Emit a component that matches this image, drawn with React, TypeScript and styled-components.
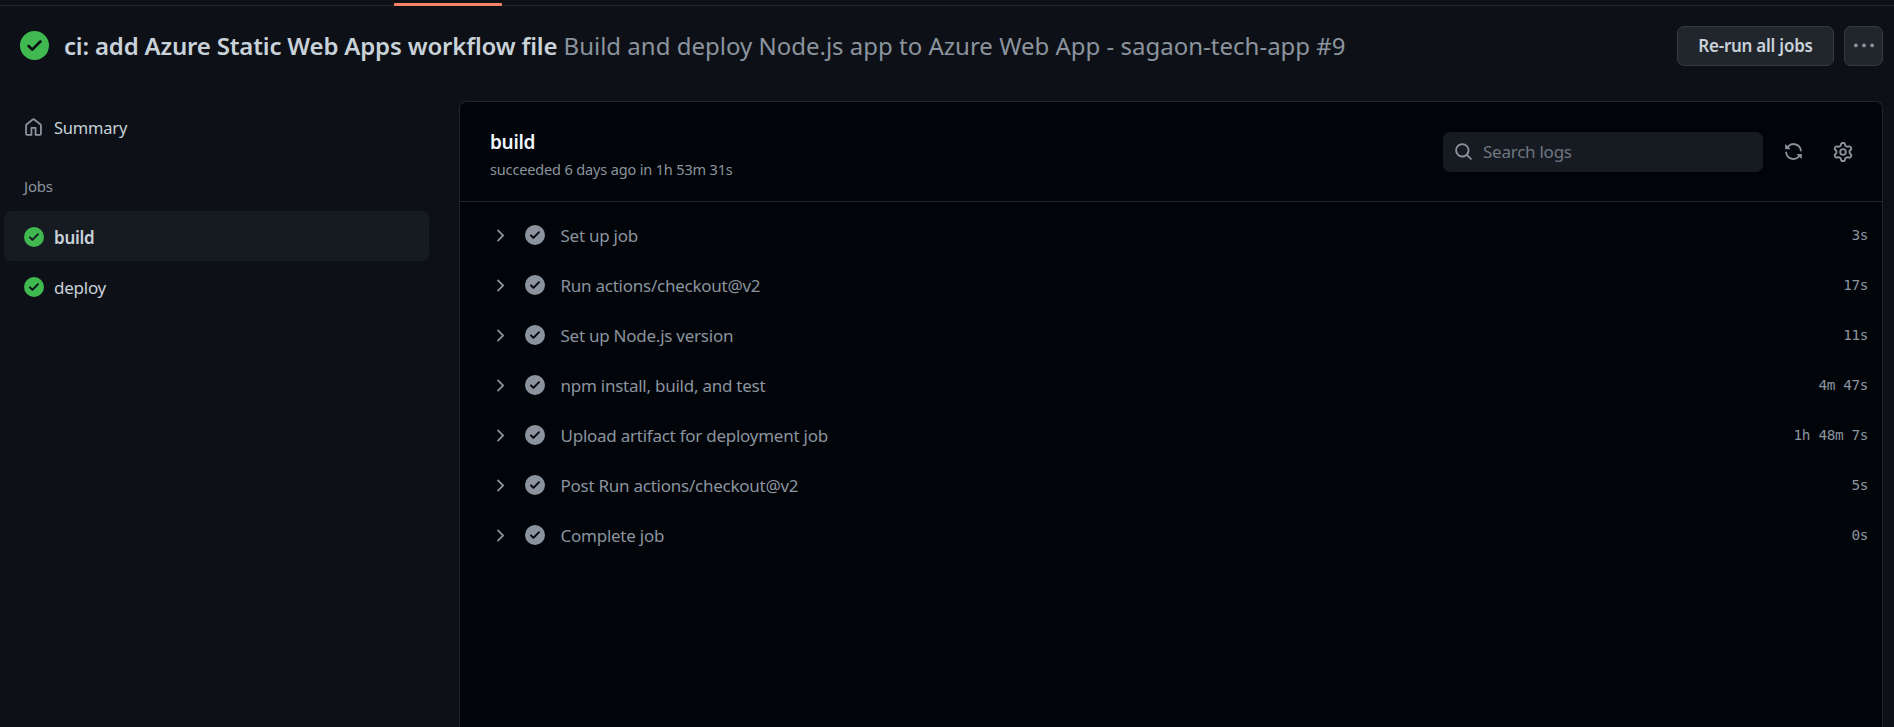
import { createGlobalStyle } from "styled-components";
import styled from "styled-components";

const CHECK_FILL =
  "M8 16A8 8 0 1 1 8 0a8 8 0 0 1 0 16Zm3.78-9.72a.751.751 0 0 0-.018-1.042.751.751 0 0 0-1.042-.018L6.75 9.19 5.28 7.72a.751.751 0 0 0-1.042.018.751.751 0 0 0-.018 1.042l2 2a.75.75 0 0 0 1.06 0Z";
const HOME =
  "M6.906.664a1.749 1.749 0 0 1 2.187 0l5.25 4.2c.415.332.657.835.657 1.367v7.019A1.75 1.75 0 0 1 13.25 15h-3.5a.75.75 0 0 1-.75-.75V9H7v5.25a.75.75 0 0 1-.75.75h-3.5A1.75 1.75 0 0 1 1 13.25V6.23c0-.531.242-1.034.657-1.366l5.25-4.2Zm1.25 1.171a.25.25 0 0 0-.312 0l-5.25 4.2a.25.25 0 0 0-.094.196v7.019c0 .138.112.25.25.25H5.5V8.25a.75.75 0 0 1 .75-.75h3.5a.75.75 0 0 1 .75.75v5.25h2.75a.25.25 0 0 0 .25-.25V6.23a.25.25 0 0 0-.094-.195Z";
const CHEVRON =
  "M6.22 3.22a.75.75 0 0 1 1.06 0l4.25 4.25a.75.75 0 0 1 0 1.06l-4.25 4.25a.751.751 0 0 1-1.042-.018.751.751 0 0 1-.018-1.042L9.94 8 6.22 4.28a.75.75 0 0 1 0-1.06Z";
const SEARCH =
  "M10.68 11.74a6 6 0 0 1-7.922-8.982 6 6 0 0 1 8.982 7.922l3.04 3.04a.749.749 0 0 1-.326 1.275.749.749 0 0 1-.734-.215ZM11.5 7a4.499 4.499 0 1 0-8.997 0A4.499 4.499 0 0 0 11.5 7Z";
const SYNC =
  "M1.705 8.005a.75.75 0 0 1 .834.656 5.5 5.5 0 0 0 9.592 2.97l-1.204-1.204a.25.25 0 0 1 .177-.427h3.646a.25.25 0 0 1 .25.25v3.646a.25.25 0 0 1-.427.177l-1.38-1.38A7.002 7.002 0 0 1 1.05 8.84a.75.75 0 0 1 .656-.834ZM8 2.5a5.487 5.487 0 0 0-4.131 1.869l1.204 1.204A.25.25 0 0 1 4.896 6H1.25A.25.25 0 0 1 1 5.75V2.104a.25.25 0 0 1 .427-.177l1.38 1.38A7.002 7.002 0 0 1 14.95 7.16a.75.75 0 0 1-1.49.178A5.5 5.5 0 0 0 8 2.5Z";
const GEAR =
  "M8 0a8.2 8.2 0 0 1 .701.031C9.444.095 9.99.645 10.16 1.29l.288 1.107c.018.066.079.158.212.224.231.114.454.243.668.386.123.082.233.09.299.071l1.103-.303c.644-.176 1.392.021 1.82.63.27.385.506.792.704 1.218.315.675.111 1.422-.364 1.891l-.814.806c-.049.048-.098.147-.088.294.016.257.016.515 0 .772-.01.147.038.246.088.294l.814.806c.475.469.679 1.216.364 1.891a7.977 7.977 0 0 1-.704 1.217c-.428.61-1.176.807-1.82.63l-1.102-.302c-.067-.019-.177-.011-.3.071a5.909 5.909 0 0 1-.668.386c-.133.066-.194.158-.211.224l-.29 1.106c-.168.646-.715 1.196-1.458 1.26a8.006 8.006 0 0 1-1.402 0c-.743-.064-1.289-.614-1.458-1.26l-.289-1.106c-.018-.066-.079-.158-.212-.224a5.738 5.738 0 0 1-.668-.386c-.123-.082-.233-.09-.299-.071l-1.103.303c-.644.176-1.392-.021-1.82-.63a8.12 8.12 0 0 1-.704-1.218c-.315-.675-.111-1.422.363-1.891l.815-.806c.05-.048.098-.147.088-.294a6.214 6.214 0 0 1 0-.772c.01-.147-.038-.246-.088-.294l-.815-.806C.635 6.045.431 5.298.746 4.623a7.92 7.92 0 0 1 .704-1.217c.428-.61 1.176-.807 1.82-.63l1.102.302c.067.019.177.011.3-.071.214-.143.437-.272.668-.386.133-.066.194-.158.211-.224l.29-1.106C6.009.645 6.556.095 7.299.03 7.53.01 7.764 0 8 0Zm-.571 1.525c-.036.003-.108.036-.137.146l-.289 1.105c-.147.561-.549.967-.998 1.189-.173.086-.34.183-.5.29-.417.278-.97.423-1.529.27l-1.103-.303c-.109-.03-.175.016-.195.045-.22.312-.412.644-.573.99-.014.031-.021.11.059.19l.815.806c.411.406.562.957.53 1.456a4.709 4.709 0 0 0 0 .582c.032.499-.119 1.05-.53 1.456l-.815.806c-.081.08-.073.159-.059.19.162.346.353.677.573.989.02.03.085.076.195.046l1.102-.303c.56-.153 1.113-.008 1.53.27.161.107.328.204.501.29.447.222.85.629.997 1.189l.289 1.105c.029.109.101.143.137.146a6.6 6.6 0 0 0 1.142 0c.036-.003.108-.036.137-.146l.289-1.105c.147-.561.549-.967.998-1.189.173-.086.34-.183.5-.29.417-.278.97-.423 1.529-.27l1.103.303c.109.029.175-.016.195-.045.22-.313.411-.644.573-.99.014-.031.021-.11-.059-.19l-.815-.806c-.411-.406-.562-.957-.53-1.456a4.709 4.709 0 0 0 0-.582c-.032-.499.119-1.05.53-1.456l.815-.806c.081-.08.073-.159.059-.19a6.464 6.464 0 0 0-.573-.989c-.02-.03-.085-.076-.195-.046l-1.102.303c-.56.153-1.113.008-1.53-.27a4.44 4.44 0 0 0-.501-.29c-.447-.222-.85-.629-.997-1.189l-.289-1.105c-.029-.11-.101-.143-.137-.146a6.6 6.6 0 0 0-1.142 0ZM11 8a3 3 0 1 1-6 0 3 3 0 0 1 6 0ZM9.5 8a1.5 1.5 0 1 0-3.001.001A1.5 1.5 0 0 0 9.5 8Z";
const KEBAB =
  "M8 9a1.5 1.5 0 1 0 0-3 1.5 1.5 0 0 0 0 3ZM1.5 9a1.5 1.5 0 1 0 0-3 1.5 1.5 0 0 0 0 3Zm13 0a1.5 1.5 0 1 0 0-3 1.5 1.5 0 0 0 0 3Z";

const STEPS = [
  { name: "Set up job", time: "3s" },
  { name: "Run actions/checkout@v2", time: "17s" },
  { name: "Set up Node.js version", time: "11s" },
  { name: "npm install, build, and test", time: "4m 47s" },
  { name: "Upload artifact for deployment job", time: "1h 48m 7s" },
  { name: "Post Run actions/checkout@v2", time: "5s" },
  { name: "Complete job", time: "0s" },
];

function Octicon({ d, size, color }: { d: string; size: number; color: string }) {
  return (
    <Svg viewBox="0 0 16 16" width={size} height={size} fill={color} aria-hidden>
      <path d={d} fillRule="evenodd" />
    </Svg>
  );
}

function App() {
  return (
    <>
      <GlobalStyle />
      <Page>
        <TopStrip>
          <ActiveTab />
        </TopStrip>
        <Header>
          <Octicon d={CHECK_FILL} size={29} color="#3fb950" />
          <Title>
            <strong>ci: add Azure Static Web Apps workflow file</strong>{" "}
            <span>Build and deploy Node.js app to Azure Web App - sagaon-tech-app #9</span>
          </Title>
          <HeaderActions>
            <RerunButton type="button">Re-run all jobs</RerunButton>
            <KebabButton type="button" aria-label="More">
              <Octicon d={KEBAB} size={20} color="#8b949e" />
            </KebabButton>
          </HeaderActions>
        </Header>
        <Body>
          <Sidebar>
            <SummaryLink>
              <Octicon d={HOME} size={19} color="#8b949e" />
              Summary
            </SummaryLink>
            <SideHeading>Jobs</SideHeading>
            <JobItem $active>
              <Octicon d={CHECK_FILL} size={20} color="#3fb950" />
              build
            </JobItem>
            <JobItem>
              <Octicon d={CHECK_FILL} size={20} color="#3fb950" />
              deploy
            </JobItem>
          </Sidebar>
          <Panel>
            <PanelHead>
              <div>
                <JobName>build</JobName>
                <JobMeta>succeeded 6 days ago in 1h 53m 31s</JobMeta>
              </div>
              <PanelTools>
                <SearchBox>
                  <Octicon d={SEARCH} size={19} color="#8b949e" />
                  <SearchInput placeholder="Search logs" readOnly />
                </SearchBox>
                <ToolIcon>
                  <Octicon d={SYNC} size={19} color="#8b949e" />
                </ToolIcon>
                <ToolIcon>
                  <Octicon d={GEAR} size={20} color="#8b949e" />
                </ToolIcon>
              </PanelTools>
            </PanelHead>
            <StepList>
              {STEPS.map((step) => (
                <StepRow key={step.name}>
                  <Octicon d={CHEVRON} size={19} color="#8b949e" />
                  <Octicon d={CHECK_FILL} size={20} color="#8b949e" />
                  <StepName>{step.name}</StepName>
                  <StepTime>{step.time}</StepTime>
                </StepRow>
              ))}
            </StepList>
          </Panel>
        </Body>
      </Page>
    </>
  );
}

const GlobalStyle = createGlobalStyle`
  html, body {
    margin: 0;
    height: 100%;
    overflow: hidden;
    background: #0d1117;
  }
  body {
    font-family: "Noto Sans", "Open Sans", sans-serif;
    color: #c9d1d9;
  }
`;

const Svg = styled.svg`
  flex: none;
  display: block;
`;

const Page = styled.div`
  height: 727px;
  display: flex;
  flex-direction: column;
  background: #0d1117;
  overflow: hidden;
`;

const TopStrip = styled.div`
  height: 5px;
  padding-left: 394px;
  border-bottom: 1px solid #21262d;
`;

const ActiveTab = styled.div`
  width: 108px;
  height: 3px;
  margin-top: 3px;
  background: #f78166;
  border-radius: 1px;
`;

const Header = styled.header`
  height: 79px;
  padding: 0 11px 0 20px;
  display: flex;
  align-items: center;
  gap: 15px;
`;

const Title = styled.h1`
  margin: 0;
  flex: 1;
  font-size: 24px;
  font-weight: 400;
  letter-spacing: 0;
  white-space: nowrap;
  color: #8b949e;

  strong {
    font-weight: 600;
    letter-spacing: -0.18px;
    color: #c9d1d9;
  }
`;

const HeaderActions = styled.div`
  display: flex;
  gap: 10px;
`;

const RerunButton = styled.button`
  width: 157px;
  height: 40px;
  padding: 0;
  font: 600 17px "Noto Sans", sans-serif;
  letter-spacing: -0.25px;
  color: #c9d1d9;
  background: #21262d;
  border: 1px solid #363b42;
  border-radius: 7px;
`;

const KebabButton = styled.button`
  width: 39px;
  height: 40px;
  padding: 0;
  display: flex;
  align-items: center;
  justify-content: center;
  background: #21262d;
  border: 1px solid #363b42;
  border-radius: 7px;
`;

const Body = styled.div`
  flex: 1;
  display: flex;
  padding: 16px 11px 0 4px;
  min-height: 0;
`;

const Sidebar = styled.nav`
  width: 425px;
  margin-right: 30px;
  flex: none;
  display: flex;
  flex-direction: column;
`;

const SummaryLink = styled.div`
  height: 50px;
  margin-top: 1px;
  padding-left: 20px;
  display: flex;
  align-items: center;
  gap: 11px;
  font-size: 16.5px;
  letter-spacing: -0.2px;
  color: #c9d1d9;
`;

const SideHeading = styled.div`
  height: 59px;
  box-sizing: border-box;
  padding: 9px 0 0 20px;
  display: flex;
  align-items: center;
  font-size: 15px;
  letter-spacing: -0.2px;
  color: #8b949e;
`;

const JobItem = styled.div<{ $active?: boolean }>`
  height: 50px;
  box-sizing: border-box;
  padding: 2px 0 0 20px;
  display: flex;
  align-items: center;
  gap: 10px;
  font-size: 17px;
  letter-spacing: -0.25px;
  font-weight: ${(p) => (p.$active ? 600 : 400)};
  color: #c9d1d9;
  background: ${(p) => (p.$active ? "#161b22" : "transparent")};
  border-radius: 7px;
`;

const Panel = styled.main`
  flex: 1;
  min-width: 0;
  background: #010409;
  border: 1px solid #21262d;
  border-bottom: none;
  border-radius: 7px 7px 0 0;
`;

const PanelHead = styled.div`
  height: 99px;
  padding: 0 14px 0 30px;
  display: flex;
  align-items: center;
  justify-content: space-between;
  border-bottom: 1px solid #21262d;
`;

const JobName = styled.div`
  margin-top: 5px;
  font-size: 19px;
  line-height: 24px;
  font-weight: 600;
  letter-spacing: -0.3px;
  color: #f0f6fc;
`;

const JobMeta = styled.div`
  margin-top: 5px;
  font-size: 14.5px;
  line-height: 20px;
  letter-spacing: -0.15px;
  color: #8b949e;
`;

const PanelTools = styled.div`
  display: flex;
  align-items: center;
`;

const SearchBox = styled.div`
  width: 320px;
  height: 40px;
  margin-right: 5px;
  padding-left: 11px;
  box-sizing: border-box;
  display: flex;
  align-items: center;
  gap: 8px;
  background: #161b22;
  border-radius: 7px;
`;

const SearchInput = styled.input`
  flex: 1;
  min-width: 0;
  border: none;
  outline: none;
  background: transparent;
  font: 400 17px "Noto Sans", sans-serif;
  letter-spacing: -0.25px;
  color: #c9d1d9;

  &::placeholder {
    color: #6e7681;
    opacity: 1;
  }
`;

const ToolIcon = styled.div`
  width: 50px;
  display: flex;
  justify-content: center;
`;

const StepList = styled.div`
  padding-top: 8px;
`;

const StepRow = styled.div`
  height: 50px;
  padding: 0 14px 0 30px;
  display: flex;
  align-items: center;
  font-size: 17px;
  letter-spacing: -0.25px;

  svg:nth-of-type(2) {
    margin-left: 16px;
  }
`;

const StepName = styled.span`
  flex: 1;
  margin-left: 15.5px;
  color: #8b949e;
`;

const StepTime = styled.span`
  font: 400 14.4px "DejaVu Sans Mono", "Liberation Mono", monospace;
  letter-spacing: -0.4px;
  color: #8b949e;
`;

export default App;
